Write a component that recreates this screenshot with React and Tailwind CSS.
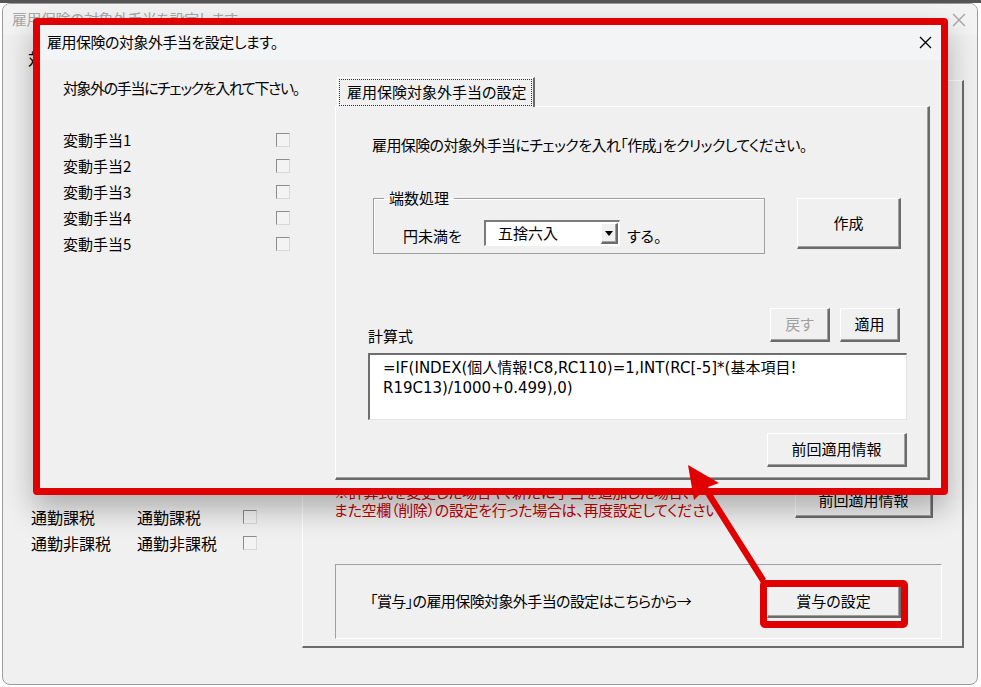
import React from "react";

const raised =
  "bg-[#f0f0f0] border-t border-l border-r-2 border-b-2 border-t-white border-l-white border-r-[#6b6b6b] border-b-[#6b6b6b] shadow-[inset_-1px_-1px_0_#a0a0a0]";

const Btn = ({ children, className = "", disabled }) => (
  <div
    className={`flex items-center justify-center ${raised} ${
      disabled ? "text-[#a0a0a0]" : "text-black"
    } ${className}`}
  >
    {children}
  </div>
);

const Check = () => (
  <div className="w-[14px] h-[14px] border border-t-[#8c8c8c] border-l-[#8c8c8c] border-r-[#d8d8d8] border-b-[#d8d8d8] bg-[#f3f3f3]" />
);

const CloseX = ({ color = "#000", size = 13 }) => (
  <svg width={size} height={size} viewBox="0 0 13 13">
    <path d="M1 1L12 12M12 1L1 12" stroke={color} strokeWidth="1.3" />
  </svg>
);

const items = ["変動手当1", "変動手当2", "変動手当3", "変動手当4", "変動手当5"];

// 後ろのダイアログ
const BackDialog = () => (
  <div className="absolute left-[2px] top-[3px] w-[976px] h-[682px] rounded-[8px] border border-[#9c9c9c] bg-[#f0f0f0] overflow-hidden flex flex-col">
    <div className="h-[31px] shrink-0 flex items-center justify-between pl-[9px] pr-[11px] bg-[#f3f3f3] text-[15px] text-[#a8a8a8] tracking-[-0.5px]">
      <span>雇用保険の対象外手当を設定します</span>
      <CloseX color="#a8a8a8" size={14} />
    </div>
    <div className="flex flex-1">
      <div className="w-[299px] shrink-0 pl-[25px] pt-[13px] text-[16px]">
        <div className="leading-[20px] whitespace-nowrap">対象外の手当にチェックを入れて下さい。</div>
        <div className="mt-[436px] ml-[3px]">
          {[
            ["通勤課税", "通勤課税"],
            ["通勤非課税", "通勤非課税"],
          ].map(([a, b]) => (
            <div key={a} className="h-[26px] flex items-center">
              <span className="w-[106px]">{a}</span>
              <span className="w-[106px]">{b}</span>
              <Check />
            </div>
          ))}
        </div>
      </div>
      <div className="mt-[45px] w-[662px] h-[568px] border-t border-l border-r-2 border-b-2 border-t-white border-l-white border-r-[#6b6b6b] border-b-[#6b6b6b] pl-[31px] pr-[20px] pt-[403px] text-[15px]">
        <div className="flex justify-between items-start">
          <div className="-mt-[1px] w-[382px] overflow-hidden whitespace-nowrap text-[#c00000] leading-[18px] tracking-[-0.3px]">
            <div>※計算式を変更した場合や、新たに手当を追加した場合、</div>
            <div>また空欄（削除）の設定を行った場合は、再度設定してください。</div>
          </div>
          <Btn className="w-[138px] h-[34px] mr-[9px]">前回適用情報</Btn>
        </div>
        <div className="mt-[45px] ml-[1px] w-[607px] h-[75px] border border-t-[#a0a0a0] border-l-[#a0a0a0] border-r-white border-b-white flex items-center justify-between pl-[34px] pr-[40px]">
          <span className="tracking-[-0.6px]">「賞与」の雇用保険対象外手当の設定はこちらから→</span>
          <Btn className="w-[134px] h-[32px]">賞与の設定</Btn>
        </div>
      </div>
    </div>
  </div>
);

// 前面のダイアログ
const FrontDialog = () => (
  <div className="absolute left-[33px] top-[18px] w-[915px] h-[477px] border-[7px] border-[#e00000] rounded-[4px] bg-[#f0f0f0] shadow-[0_14px_30px_rgba(0,0,0,0.28)] flex flex-col text-[15px]">
    <div className="h-[35px] shrink-0 bg-[#f2f4f6] flex items-center justify-between pl-[7px] pr-[9px]">
      <span className="tracking-[-0.5px]">雇用保険の対象外手当を設定します。</span>
      <CloseX />
    </div>
    <div className="flex flex-1">
      {/* left list */}
      <div className="w-[295px] shrink-0 pl-[23px] pt-[18px]">
        <div className="leading-[20px] whitespace-nowrap tracking-[-1.4px]">対象外の手当にチェックを入れて下さい。</div>
        <div className="mt-[29px] w-[227px]">
          {items.map((t) => (
            <div key={t} className="h-[26px] flex items-center justify-between">
              <span>{t}</span>
              <Check />
            </div>
          ))}
        </div>
      </div>

      {/* tab control */}
      <div className="pt-[17px] flex flex-col">
        <div className="relative z-10 ml-[2px] w-[198px] h-[30px] -mb-px bg-[#f0f0f0] border-t border-l border-r-2 border-t-white border-l-white border-r-[#6b6b6b] p-[1px]">
          <div className="h-full border border-dotted border-[#333] flex items-center pl-[7px]">
            雇用保険対象外手当の設定
          </div>
        </div>
        <div className="w-[595px] h-[374px] border-t border-l border-r-2 border-b-2 border-t-white border-l-white border-r-[#6b6b6b] border-b-[#6b6b6b] shadow-[inset_-1px_-1px_0_#a0a0a0] flex flex-col">
          <div className="mt-[28px] ml-[36px] leading-[20px] whitespace-nowrap tracking-[-0.6px]">
            雇用保険の対象外手当にチェックを入れ「作成」をクリックしてください。
          </div>

          <div className="mt-[34px] ml-[37px] flex items-start">
            <fieldset className="w-[392px] h-[65px] border border-[#a0a0a0] shadow-[inset_1px_1px_0_#fff]">
              <legend className="ml-[10px] px-[5px] leading-[18px]">端数処理</legend>
              <div className="mt-[13px] pl-[29px] flex items-end">
                <span className="w-[81px] leading-[20px]">円未満を</span>
                <div className="w-[136px] h-[26px] bg-white border-t-2 border-l-2 border-r border-b border-t-[#7a7a7a] border-l-[#7a7a7a] border-r-white border-b-white flex items-center justify-between pl-[12px] pr-[1px]">
                  <span>五捨六入</span>
                  <div className={`w-[17px] h-[21px] flex items-center justify-center ${raised}`}>
                    <svg width="8" height="5" viewBox="0 0 8 5">
                      <path d="M0 0H8L4 5Z" fill="#000" />
                    </svg>
                  </div>
                </div>
                <span className="ml-[7px] leading-[20px]">する。</span>
              </div>
            </fieldset>
            <Btn className="ml-[32px] mt-[9px] w-[104px] h-[51px]">作成</Btn>
          </div>

          <div className="mt-[54px] ml-[32px] mr-[28px] flex items-end justify-between">
            <span className="leading-[20px] -mb-[4px]">計算式</span>
            <div className="flex gap-[10px]">
              <Btn disabled className="w-[60px] h-[34px]">戻す</Btn>
              <Btn className="w-[60px] h-[34px]">適用</Btn>
            </div>
          </div>

          <div className="mt-[11px] ml-[32px] w-[539px] h-[67px] bg-white border-t-2 border-l-2 border-r border-b border-t-[#6e6e6e] border-l-[#6e6e6e] border-r-[#e3e3e3] border-b-[#e3e3e3] pl-[13px] pt-[3px] text-[15px] leading-[20px] whitespace-nowrap [font-family:'DejaVu_Sans','Noto_Sans_CJK_JP',sans-serif] [font-feature-settings:normal]">
            =IF(INDEX(個人情報!C8,RC110)=1,INT(RC[-5]*(基本項目!
            <br />
            R19C13)/1000+0.499),0)
          </div>

          <Btn className="mt-[13px] self-end mr-[21px] w-[140px] h-[34px]">前回適用情報</Btn>
        </div>
      </div>
    </div>
  </div>
);

export default function App() {
  return (
    <div className="relative w-[981px] h-[687px] overflow-hidden bg-white text-black [font-family:'Noto_Sans_CJK_JP',sans-serif] [font-feature-settings:'palt']">
      <div className="h-[3px] bg-[#555]" />
      <BackDialog />
      <FrontDialog />

      {/* annotation */}
      <div className="absolute left-[760px] top-[580px] w-[148px] h-[48px] border-[7px] border-[#e00000] rounded-[5px]" />
      <svg className="absolute inset-0 pointer-events-none" width="981" height="687" viewBox="0 0 981 687">
        <polygon
          points="688,465 719,483 708,487 766,579 761,583 703,491 694,500"
          fill="#e00000"
        />
      </svg>
    </div>
  );
}
